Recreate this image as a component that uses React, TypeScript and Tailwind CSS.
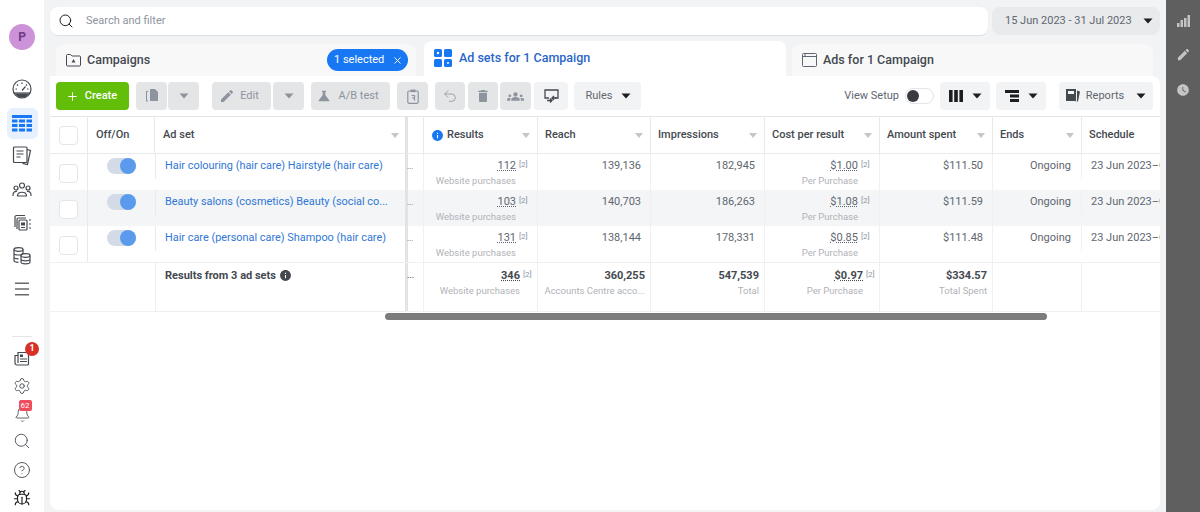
import { Bell, Bug, CircleHelp, Menu, Plus, Search, Settings, Undo2, X } from 'lucide-react';
import { MdDelete, MdEdit, MdGroups, MdInfo, MdScience, MdWatchLater } from 'react-icons/md';
import type { ReactNode } from 'react';

const Caret = ({ className = 'text-[#1c1e21]' }: { className?: string }) => (
  <svg width="10" height="6" viewBox="0 0 10 6" className={className}>
    <path d="M0.5 0.5h9L5 5.5z" fill="currentColor" />
  </svg>
);

const SmallCaret = () => (
  <svg width="8" height="5" viewBox="0 0 8 5" className="text-[#c4c6c9]">
    <path d="M0 0h8L4 5z" fill="currentColor" />
  </svg>
);

const GaugeIcon = () => (
  <svg width="20" height="20" viewBox="0 0 20 20" fill="none" stroke="#444950" strokeWidth="1.200">
    <circle cx="10" cy="10" r="9" />
    <path d="M2 14h16" />
    <path d="M3 14.500h14a8 8 0 01-14 0z" fill="#444950" stroke="none" />
    <path d="M10 3.500v1.500M5 5.500l1 1M15 5.500l-1 1M3.500 10H5M16.500 10H15M10 11.500l3.500-4" />
  </svg>
);

const TableIcon = () => (
  <svg width="20" height="17" viewBox="0 0 20 17" fill="#1877f2">
    <rect x="0" y="0" width="20" height="3" />
    <rect x="0" y="4.5" width="5.5" height="3" />
    <rect x="7" y="4.5" width="6" height="3" />
    <rect x="14.5" y="4.5" width="5.5" height="3" />
    <rect x="0" y="9" width="5.5" height="3" />
    <rect x="7" y="9" width="6" height="3" />
    <rect x="14.5" y="9" width="5.5" height="3" />
    <rect x="0" y="13.5" width="5.5" height="3" />
    <rect x="7" y="13.5" width="6" height="3" />
    <rect x="14.5" y="13.5" width="5.5" height="3" />
  </svg>
);

const PagesIcon = () => (
  <svg width="20" height="20" viewBox="0 0 20 20" fill="none" stroke="#444950" strokeWidth="1.2">
    <path d="M15 3.5l3.5 1-3 14-5-1.2" />
    <rect x="1.5" y="1" width="13.5" height="15.5" rx="1" fill="#fff" />
    <path d="M4.5 5h7M4.5 8h7M4.5 11h4" />
  </svg>
);

const PeopleIcon = () => (
  <svg width="20" height="16" viewBox="0 0 20 16" fill="none" stroke="#444950" strokeWidth="1.2">
    <circle cx="10" cy="3.5" r="2.5" />
    <circle cx="4" cy="6" r="2" />
    <circle cx="16" cy="6" r="2" />
    <path d="M5.5 14c0-5 9-5 9 0zM1 14c-.5-4 2.5-5 4-4.5M19 14c.5-4-2.500-5-4-4.500" />
  </svg>
);

const AdsIcon = () => (
  <svg width="20" height="18" viewBox="0 0 20 18" fill="none" stroke="#444950" strokeWidth="1.2">
    <path d="M3 13V3a1.500 1.500 0 011.500-1.500H13" />
    <path d="M5 15V5.500A1.500 1.500 0 016.500 4H14" />
    <rect x="7" y="6" width="8" height="10" rx="1" />
    <rect x="9" y="8.500" width="4" height="3" fill="#444950" stroke="none" />
    <path d="M9 13.500h4M17 6h2M17 10h2M17 14h2" />
  </svg>
);

const StackIcon = () => (
  <svg width="18" height="18" viewBox="0 0 18 18" fill="none" stroke="#444950" strokeWidth="1.200">
    <ellipse cx="5.500" cy="2.500" rx="4.500" ry="1.800" />
    <path d="M1 2.500v11c0 1 2 1.800 4.500 1.800M1 6.200c0 1 2 1.800 4.500 1.800s4.500-.8 4.500-1.800V2.500M1 10c0 1 2 1.800 4.500 1.800" />
    <ellipse cx="12.500" cy="8.500" rx="4.500" ry="1.800" />
    <path d="M8 8.500v6.500c0 1 2 1.800 4.500 1.800s4.500-.8 4.500-1.800V8.500M8 12c0 1 2 1.800 4.500 1.800s4.500-.8 4.500-1.800" />
  </svg>
);

const NewsIcon = () => (
  <svg width="16" height="15" viewBox="0 0 16 15" fill="none" stroke="#444950" strokeWidth="1.200">
    <path d="M4 1.500h10.500V13a1 1 0 01-1 1H3a2 2 0 01-2-2V4.500h3z" />
    <path d="M4 4.500V12" />
    <rect x="6" y="3.500" width="3" height="2.500" fill="#444950" stroke="none" />
    <path d="M6 8h7M6 10.500h7" />
  </svg>
);

const FolderAdIcon = () => (
  <svg width="15" height="13" viewBox="0 0 15 13" fill="none" stroke="#444950" strokeWidth="1">
    <path d="M.5 1.500A1 1 0 011.500.5h3l1.500 1.500h7.500a1 1 0 011 1v8a1 1 0 01-1 1h-12a1 1 0 01-1-1z" />
    <path d="M7.500 5l2 3.500h-4z" fill="#444950" stroke="none" />
  </svg>
);

const AdSetsIcon = () => (
  <svg width="18" height="18" viewBox="0 0 18 18" fill="#1877f2">
    <rect x="0" y="0" width="8" height="8" rx="1.500" />
    <rect x="10" y="0" width="8" height="8" rx="1.500" />
    <rect x="0" y="10" width="8" height="8" rx="1.500" />
    <path fillRule="evenodd" d="M11.500 10h5a1.500 1.500 0 011.500 1.500v5a1.500 1.500 0 01-1.500 1.500h-5a1.500 1.500 0 01-1.500-1.500v-5a1.500 1.500 0 011.500-1.500zm2.500 3a1 1 0 100 2 1 1 0 000-2z" />
    <circle cx="4" cy="4" r="1.200" fill="#fff" />
  </svg>
);

const AdWindowIcon = () => (
  <svg width="15" height="14" viewBox="0 0 15 14" fill="none" stroke="#606770" strokeWidth="1">
    <rect x=".5" y=".5" width="14" height="13" rx="1" />
    <path d="M.5 3.500h14M2 2h2" />
  </svg>
);

const DuplicateIcon = () => (
  <svg width="14" height="14" viewBox="0 0 14 14" fill="#8d949e">
    <path d="M5 0h5l3 3v9H5z" />
    <path d="M3 2H1v10.500h2v-1H2V3h1z" />
  </svg>
);

const ClipIcon = () => (
  <svg width="12" height="15" viewBox="0 0 12 15" fill="none" stroke="#8d949e" strokeWidth="1.200">
    <rect x=".8" y="2" width="10.400" height="12.300" rx="1.200" />
    <rect x="3.500" y=".6" width="5" height="2.500" fill="#8d949e" stroke="none" />
    <path d="M4.500 6.500h3v5M5 9h2" />
  </svg>
);

const ShareIcon = () => (
  <svg width="15" height="14" viewBox="0 0 15 14" fill="none" stroke="#444950" strokeWidth="1.300">
    <path d="M5 9H1V1h13v8h-3" />
    <path d="M3 11.500h4.500M6 9.500l2 2-2 2M12.500 9H8M10 7l-2 2 2 2" />
  </svg>
);

const ColumnsIcon = () => (
  <svg width="14" height="12" viewBox="0 0 14 12" fill="#1c1e21">
    <rect x="0" y="0" width="3.600" height="12" />
    <rect x="5.200" y="0" width="3.600" height="12" />
    <rect x="10.400" y="0" width="3.600" height="12" />
  </svg>
);

const BreakdownIcon = () => (
  <svg width="14" height="12" viewBox="0 0 14 12" fill="#1c1e21">
    <rect x="0" y="0" width="14" height="3" />
    <rect x="5" y="4.500" width="9" height="3" />
    <rect x="5" y="9" width="9" height="3" />
  </svg>
);

const ReportsIcon = () => (
  <svg width="14" height="14" viewBox="0 0 14 14" fill="#444950">
    <path d="M0 0h10v12H0zM2 2v3h6V2z" fillRule="evenodd" />
    <path d="M11 1.500l3 1-2 10-3.500-.5H11z" />
  </svg>
);

const BarsIcon = () => (
  <svg width="13" height="12" viewBox="0 0 13 12" fill="#c4c4c4">
    <rect x="0" y="8" width="2.500" height="4" />
    <rect x="3.500" y="5" width="2.500" height="7" />
    <rect x="7" y="3" width="2.500" height="9" />
    <rect x="10.500" y="0" width="2.500" height="12" />
  </svg>
);

const Sidebar = () => (
  <aside className="flex h-full w-[44px] shrink-0 flex-col items-center bg-white">
    <div className="mt-[24px] flex h-[26px] w-[26px] items-center justify-center rounded-full bg-[#cc93d9] text-[12px] font-bold text-[#6e3a88]">
      P
    </div>
    <div className="mt-[28px] flex h-[22px] items-center">
      <GaugeIcon />
    </div>
    <div className="mt-[8px] flex h-[31px] w-[31px] items-center justify-center rounded-md bg-[#e7f1fe]">
      <TableIcon />
    </div>
    <div className="mt-[6px] flex h-[22px] items-center">
      <PagesIcon />
    </div>
    <div className="mt-[12px] flex h-[22px] items-center">
      <PeopleIcon />
    </div>
    <div className="mt-[11px] flex h-[22px] items-center">
      <AdsIcon />
    </div>
    <div className="mt-[11px] flex h-[22px] items-center">
      <StackIcon />
    </div>
    <div className="mt-[11px] flex h-[22px] items-center">
      <Menu size={20} strokeWidth={1.200} className="text-[#1c1e21]" />
    </div>
    <div className="mt-[36px] h-px w-[20px] bg-[#e4e5e7]" />
    <div className="relative mt-[10px] flex h-[22px] items-center">
      <NewsIcon />
      <span className="absolute right-[-9px] top-[-5px] flex h-[14px] w-[14px] items-center justify-center rounded-full bg-[#d93025] text-[9px] font-bold text-white">
        1
      </span>
    </div>
    <div className="mt-[6px] flex h-[22px] items-center">
      <Settings size={18} strokeWidth={1.200} className="text-[#444950]" />
    </div>
    <div className="relative mt-[6px] flex h-[22px] items-center">
      <Bell size={17} strokeWidth={1.200} className="text-[#444950]" />
      <span className="absolute left-[5px] top-[-3px] rounded-[2px] bg-[#ef4c5d] px-[2px] text-[8px] leading-[11px] text-white">
        62
      </span>
    </div>
    <div className="mt-[5px] flex h-[22px] items-center">
      <Search size={18} strokeWidth={1.200} className="text-[#444950]" />
    </div>
    <div className="mt-[7px] flex h-[22px] items-center">
      <CircleHelp size={18} strokeWidth={1.200} className="text-[#444950]" />
    </div>
    <div className="mt-[6px] flex h-[22px] items-center">
      <Bug size={18} strokeWidth={1.500} className="text-[#1c1e21]" />
    </div>
  </aside>
);

const ToolButton = ({ className, children }: { className: string; children: ReactNode }) => (
  <div className={`flex h-[28px] items-center justify-center rounded-[4px] ${className}`}>{children}</div>
);

const Toolbar = () => (
  <div className="flex h-[40px] items-center pl-[6px] pr-[7px] text-[11px]">
    <ToolButton className="w-[73px] gap-[6px] bg-[#63be09] pr-[2px] font-medium text-white">
      <Plus size={13} strokeWidth={1.800} />
      <span>Create</span>
    </ToolButton>
    <ToolButton className="ml-[7px] w-[31px] bg-[#e4e5e6]">
      <DuplicateIcon />
    </ToolButton>
    <ToolButton className="ml-px w-[31px] bg-[#e4e5e6]">
      <Caret className="text-[#8d949e]" />
    </ToolButton>
    <ToolButton className="ml-[13px] w-[59px] gap-[5px] bg-[#e4e5e6] pr-[5px] text-[#8d949e]">
      <MdEdit size={16} />
      <span>Edit</span>
    </ToolButton>
    <ToolButton className="ml-[2px] w-[31px] bg-[#e4e5e6]">
      <Caret className="text-[#8d949e]" />
    </ToolButton>
    <ToolButton className="ml-[7px] w-[79px] gap-[6px] bg-[#e4e5e6] pr-[6px] text-[#8d949e]">
      <MdScience size={16} />
      <span>A/B test</span>
    </ToolButton>
    <ToolButton className="ml-[7px] w-[31px] bg-[#e4e5e6]">
      <ClipIcon />
    </ToolButton>
    <ToolButton className="ml-[7px] w-[30px] bg-[#e4e5e6]">
      <Undo2 size={16} strokeWidth={1.200} className="text-[#8d949e]" />
    </ToolButton>
    <ToolButton className="ml-[3px] w-[30px] bg-[#e4e5e6]">
      <MdDelete size={16} className="text-[#8d949e]" />
    </ToolButton>
    <ToolButton className="ml-[2px] w-[31px] bg-[#e4e5e6]">
      <MdGroups size={17} className="text-[#8d949e]" />
    </ToolButton>
    <ToolButton className="ml-[3px] w-[34px] bg-[#f2f3f4]">
      <ShareIcon />
    </ToolButton>
    <ToolButton className="ml-[6px] w-[67px] gap-[8px] bg-[#f2f3f4] pl-[1px] text-[#606770]">
      <span>Rules</span>
      <Caret />
    </ToolButton>
    <span className="ml-auto text-[#606770]">View Setup</span>
    <div className="ml-[6px] flex h-[16px] w-[29px] items-center rounded-full border border-[#e4e5e7] bg-white">
      <div className="ml-px h-[12px] w-[12px] rounded-full bg-[#3a3b3f]" />
    </div>
    <ToolButton className="ml-[6px] w-[50px] gap-[9px] bg-[#f2f3f4]">
      <ColumnsIcon />
      <Caret />
    </ToolButton>
    <ToolButton className="ml-[6px] w-[50px] gap-[9px] bg-[#f2f3f4]">
      <BreakdownIcon />
      <Caret />
    </ToolButton>
    <ToolButton className="ml-[13px] w-[94px] gap-[6px] bg-[#f2f3f4] text-[#606770]">
      <ReportsIcon />
      <span>Reports</span>
      <Caret className="ml-[6px] text-[#1c1e21]" />
    </ToolButton>
  </div>
);

const headers = [
  { label: 'Results', info: true, caret: true },
  { label: 'Reach', caret: true },
  { label: 'Impressions', caret: true },
  { label: 'Cost per result', caret: true },
  { label: 'Amount spent', caret: true },
  { label: 'Ends', caret: true },
  { label: 'Schedule', caret: false },
];

const rows = [
  {
    name: 'Hair colouring (hair care) Hairstyle (hair care)',
    results: '112',
    reach: '139,136',
    impressions: '182,945',
    cost: '$1.00',
    spent: '$111.50',
    hover: false,
  },
  {
    name: 'Beauty salons (cosmetics) Beauty (social co...',
    results: '103',
    reach: '140,703',
    impressions: '186,263',
    cost: '$1.08',
    spent: '$111.59',
    hover: true,
  },
  {
    name: 'Hair care (personal care) Shampoo (hair care)',
    results: '131',
    reach: '138,144',
    impressions: '178,331',
    cost: '$0.85',
    spent: '$111.48',
    hover: false,
  },
];

const Metric = ({ value, sub, bold }: { value: string; sub: string; bold?: boolean }) => (
  <div className="flex flex-col items-end">
    <div className="relative">
      <span
        className={`underline decoration-dotted underline-offset-[1px] ${bold ? 'font-bold text-[#444950]' : 'text-[#606770]'}`}
      >
        {value}
      </span>
      <span className="absolute left-full top-[-1px] ml-[3px] text-[8px] text-[#8d949e]">[2]</span>
    </div>
    <span className="mt-px whitespace-nowrap text-[9.5px] leading-[13px] text-[#b0b3b8]">{sub}</span>
  </div>
);

const Plain = ({ value, sub, bold }: { value: string; sub?: string; bold?: boolean }) => (
  <div className="flex flex-col items-end">
    <span className={bold ? 'font-bold text-[#444950]' : 'text-[#606770]'}>{value}</span>
    {sub && <span className="mt-px whitespace-nowrap text-[9.5px] leading-[13px] text-[#b0b3b8]">{sub}</span>}
  </div>
);

const Check = () => <div className="h-[19px] w-[19px] rounded-[4px] border border-[#e4e5e7] bg-white" />;

const Toggle = () => (
  <div className="flex h-[16px] w-[29px] items-center justify-end rounded-full bg-[#d3dbe6]">
    <div className="h-[16px] w-[16px] rounded-full bg-[#5b9bee]" />
  </div>
);

// thick divider of the frozen columns, with the clipped "..." of the next cell
const FrozenEdge = ({ bold }: { bold?: boolean }) => (
  <div className="flex h-full">
    <div className="h-full w-[3px] bg-[#e2e3e4]" />
    <span className={`-ml-px pt-[8px] text-[8px] leading-[10px] text-[#606770] ${bold ? 'font-bold' : ''}`}>...</span>
  </div>
);

const AdTable = () => (
  <div className="grid grid-cols-[38px_67px_250px_18px_114px_113px_114px_115px_113px_89px_79px] grid-rows-[37px_36px_36px_36px_50px] overflow-hidden border-t border-[#e4e5e7] text-[11px] leading-[14px]">
    <div className="flex items-center border-b border-r border-[#e9eaeb] pl-[9px]">
      <Check />
    </div>
    <div className="flex items-center border-b border-r border-[#e9eaeb] pl-[8px] font-medium text-[#444950]">Off/On</div>
    <div className="flex items-center justify-between border-b border-[#e9eaeb] pl-[8px] pr-[6px] font-medium text-[#444950]">
      <span>Ad set</span>
      <SmallCaret />
    </div>
    <div className="border-b border-[#e9eaeb]">
      <div className="h-full w-[3px] bg-[#e2e3e4]" />
    </div>
    {headers.map((h) => (
      <div
        key={h.label}
        className="flex items-center justify-between border-b border-l border-[#e9eaeb] pl-[7px] pr-[7px] font-medium text-[#444950]"
      >
        <span className="flex items-center gap-[3px] whitespace-nowrap">
          {h.info && <MdInfo size={13} className="text-[#1877f2]" />}
          {h.label}
        </span>
        {h.caret && <SmallCaret />}
      </div>
    ))}

    {rows.map((r) => {
      const bg = r.hover ? 'bg-[#f3f5f7]' : 'bg-white';
      return [
        <div key={`${r.name}-check`} className={`flex items-center border-r border-[#e9eaeb] pl-[9px] pt-[2px] ${bg}`}>
          <Check />
        </div>,
        <div key={`${r.name}-toggle`} className={`flex justify-center pt-[4px] ${bg}`}>
          <Toggle />
        </div>,
        <div key={`${r.name}-name`} className={bg}>
          <div className="h-[25px] truncate border-l border-[#e9eaeb] pl-[9px] pt-[5px] text-[10.9px] text-[#2f77d6]">
            {r.name}
          </div>
        </div>,
        <div key={`${r.name}-more`} className={bg}>
          <FrozenEdge />
        </div>,
        <div key={`${r.name}-results`} className={`border-l border-[#eef0f1] pr-[21px] pt-[5px] ${bg}`}>
          <Metric value={r.results} sub="Website purchases" />
        </div>,
        <div key={`${r.name}-reach`} className={`border-l border-[#eef0f1] pr-[9px] pt-[5px] ${bg}`}>
          <Plain value={r.reach} />
        </div>,
        <div key={`${r.name}-impr`} className={`border-l border-[#eef0f1] pr-[9px] pt-[5px] ${bg}`}>
          <Plain value={r.impressions} />
        </div>,
        <div key={`${r.name}-cost`} className={`border-l border-[#eef0f1] pr-[21px] pt-[5px] ${bg}`}>
          <Metric value={r.cost} sub="Per Purchase" />
        </div>,
        <div key={`${r.name}-spent`} className={`border-l border-[#eef0f1] pr-[9px] pt-[5px] ${bg}`}>
          <Plain value={r.spent} />
        </div>,
        <div key={`${r.name}-ends`} className={`border-l border-[#eef0f1] pr-[10px] pt-[5px] ${bg}`}>
          <Plain value="Ongoing" />
        </div>,
        <div key={`${r.name}-sched`} className={`overflow-hidden ${bg}`}>
          <div className="h-[25px] whitespace-nowrap border-l border-[#eef0f1] pl-[9px] pt-[5px] text-[#606770]">
            23 Jun 2023–Ongoing
          </div>
        </div>,
      ];
    })}

    <div className="col-span-2 border-b border-t border-[#f0f1f2]" />
    <div className="flex items-start gap-[3px] border-b border-l border-t border-[#eceef0] pl-[9px] pt-[6px] font-bold text-[#444950]">
      Results from 3 ad sets
      <MdInfo size={13} className="text-[#444950]" />
    </div>
    <div className="border-b border-t border-[#f0f1f2]">
      <FrozenEdge bold />
    </div>
    <div className="border-b border-l border-t border-[#eef0f1] pr-[17px] pt-[6px]">
      <Metric value="346" sub="Website purchases" bold />
    </div>
    <div className="border-b border-l border-t border-[#eef0f1] pr-[5px] pt-[6px]">
      <Plain value="360,255" sub="Accounts Centre acco..." bold />
    </div>
    <div className="border-b border-l border-t border-[#eef0f1] pr-[5px] pt-[6px]">
      <Plain value="547,539" sub="Total" bold />
    </div>
    <div className="border-b border-l border-t border-[#eef0f1] pr-[16px] pt-[6px]">
      <Metric value="$0.97" sub="Per Purchase" bold />
    </div>
    <div className="border-b border-l border-t border-[#eef0f1] pr-[5px] pt-[6px]">
      <Plain value="$334.57" sub="Total Spent" bold />
    </div>
    <div className="border-b border-l border-t border-[#eef0f1]" />
    <div className="border-b border-l border-t border-[#eef0f1]" />
  </div>
);

export default function App() {
  return (
    <div className="flex h-[512px] w-[1200px] overflow-hidden font-['Roboto',sans-serif]">
      <Sidebar />

      <main className="flex min-w-0 flex-1 flex-col bg-[#f2f3f4] px-[6px] pt-[7px]">
        <div className="flex h-[28px] gap-[4px] text-[11px]">
          <div className="flex flex-1 items-center gap-[12px] rounded-lg bg-white pl-[8px] text-[#8d949e] shadow-[0_1px_1px_rgba(0,0,0,0.08)]">
            <Search size={16} strokeWidth={1.500} className="text-[#1c1e21]" />
            <span>Search and filter</span>
          </div>
          <div className="flex w-[168px] items-center gap-[11px] rounded-lg bg-[#e9eaeb] pl-[13px] text-[#606770]">
            <span className="whitespace-nowrap">15 Jun 2023 - 31 Jul 2023</span>
            <Caret />
          </div>
        </div>

        <div className="mt-[6px] flex h-[35px] items-end pl-[6px] text-[12.5px] font-medium">
          <div className="flex h-[32px] w-[360px] items-center rounded-t-lg bg-[#f8f8f9] pl-[10px] pr-[8px] text-[#444950]">
            <FolderAdIcon />
            <span className="ml-[6px]">Campaigns</span>
            <div className="ml-auto flex h-[22px] w-[81px] items-center gap-[8px] rounded-full bg-[#1877f2] pl-[7px] text-[11px] font-normal text-white">
              <span>1 selected</span>
              <X size={11} />
            </div>
          </div>
          <div className="ml-[8px] flex h-[35px] w-[362px] items-center gap-[7px] rounded-t-lg bg-white pb-[1px] pl-[10px] text-[#2a66c9]">
            <AdSetsIcon />
            <span>Ad sets for 1 Campaign</span>
          </div>
          <div className="ml-[6px] flex h-[32px] w-[361px] items-center gap-[6px] rounded-t-lg bg-[#f8f8f9] pl-[10px] text-[#444950]">
            <AdWindowIcon />
            <span>Ads for 1 Campaign</span>
          </div>
        </div>

        <section className="relative mb-[2px] flex-1 overflow-hidden rounded-lg rounded-tl-none bg-white">
          <Toolbar />
          <AdTable />
          {/* horizontal scrollbar floats over the table's bottom edge */}
          <div className="absolute left-[335px] top-[237px] h-[7px] w-[662px] rounded-full bg-[#7c7c7c]" />
        </section>
      </main>

      <aside className="flex w-[34px] shrink-0 flex-col items-center bg-[#5f5f5f] pt-[15px] text-[#c4c4c4]">
        <BarsIcon />
        <MdEdit size={15} className="mt-[20px]" />
        <MdWatchLater size={14} className="mt-[21px]" />
      </aside>
    </div>
  );
}
